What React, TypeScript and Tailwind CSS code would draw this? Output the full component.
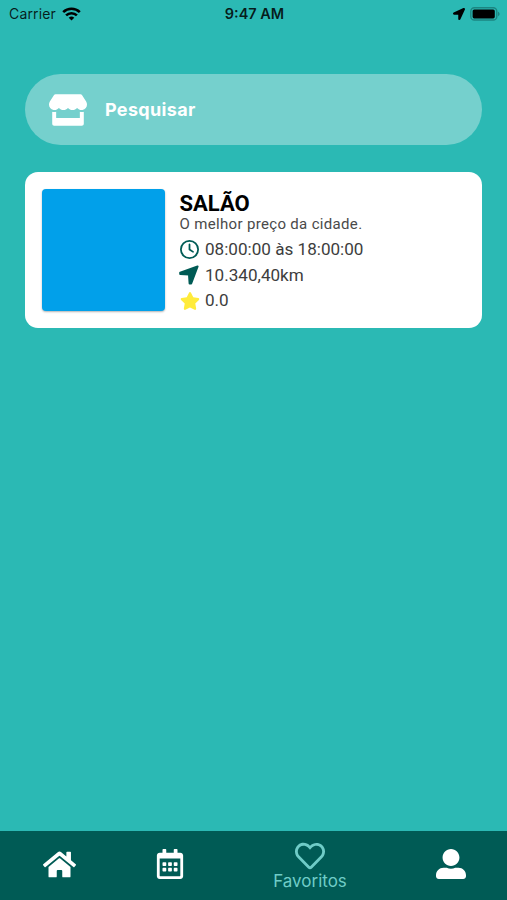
import type { ReactNode } from 'react';
import {
  FaHome,
  FaLocationArrow,
  FaRegCalendarAlt,
  FaRegHeart,
  FaStar,
  FaStore,
  FaUserAlt,
} from 'react-icons/fa';
import { FaRegClock } from 'react-icons/fa6';

interface Salon {
  id: string;
  name: string;
  description: string;
  hours: string;
  distance: string;
  rating: string;
}

const salons: Salon[] = [
  {
    id: '1',
    name: 'SALÃO',
    description: 'O melhor preço da cidade.',
    hours: '08:00:00 às 18:00:00',
    distance: '10.340,40km',
    rating: '0.0',
  },
];

function NavigateIcon({ className }: { className: string }) {
  return (
    <svg className={className} viewBox="0 0 20 20" fill="currentColor" stroke="currentColor" strokeWidth="2" strokeLinejoin="round">
      <path d="M18.6 1.4 1.2 7.6v1.5l8.8.5.6 8.9h1.6z" />
    </svg>
  );
}

function StatusBar() {
  return (
    <div className="flex h-[27px] items-center justify-between pl-[9px] pr-[7px] text-black/85">
      <div className="flex w-[120px] items-center gap-[6px]">
        <span className="text-[14px] tracking-[0.15px]">Carrier</span>
        <svg className="h-[14px] w-[19px]" viewBox="0 0 19 14" fill="none" stroke="black" strokeWidth="2.6">
          <path d="M1.2 5.1a11.9 11.9 0 0 1 16.6 0" />
          <path d="M4.1 8.4a7.7 7.7 0 0 1 10.8 0" />
          <path d="M9.5 13.5 6.7 10.8a4 4 0 0 1 5.6 0z" fill="black" stroke="none" />
        </svg>
      </div>
      <span className="text-[14.5px] font-semibold">9:47 AM</span>
      <div className="flex w-[120px] items-center justify-end gap-[5px]">
        <FaLocationArrow className="size-[12px] text-black" />
        <svg className="h-[14px] w-[30px]" viewBox="0 0 30 14">
          <rect x="0.8" y="0.8" width="26" height="12.2" rx="3.6" fill="none" stroke="#1c8581" strokeWidth="1.4" />
          <rect x="2.6" y="2.4" width="22.2" height="9" rx="1.6" fill="black" />
          <path d="M28 4.8v4.4c1-.4 1.6-1.2 1.6-2.2s-.6-1.8-1.6-2.2z" fill="#1c8581" />
        </svg>
      </div>
    </div>
  );
}

function InfoRow({ icon, children }: { icon: ReactNode; children: ReactNode }) {
  return (
    <div className="flex h-[25.6px] items-center gap-[6px] text-[17.1px] text-[#3d3d3d]">
      <span className="flex w-[20px] justify-center">{icon}</span>
      <span>{children}</span>
    </div>
  );
}

function SalonCard({ salon }: { salon: Salon }) {
  return (
    <div className="flex h-[156px] gap-[14px] rounded-[13px] bg-white p-[17px] font-[Roboto,sans-serif]">
      <div className="h-[122px] w-[123px] shrink-0 rounded-[4px] bg-[#01a0ea] shadow-[0_1px_2px_rgba(0,0,0,0.3)]" />
      <div className="pt-[3px]">
        <h2 className="pl-[0.5px] text-[22px] leading-[23px] font-bold text-black">{salon.name}</h2>
        <p className="mb-[4px] pl-[0.5px] text-[15px] leading-[18px] tracking-[0.33px] text-[#4a4a4a]">
          {salon.description}
        </p>
        <InfoRow icon={<FaRegClock className="size-[19px] text-[#005b55]" />}>{salon.hours}</InfoRow>
        <InfoRow icon={<NavigateIcon className="mb-[1px] size-[20px] text-[#005b55]" />}>{salon.distance}</InfoRow>
        <InfoRow icon={<FaStar className="ml-[2px] size-[20px] shrink-0 text-[#ffeb3b]" />}>{salon.rating}</InfoRow>
      </div>
    </div>
  );
}

function TabBar() {
  return (
    <nav className="flex h-[69px] items-center bg-[#005b55] text-white">
      <button className="flex w-[118px] justify-center pb-[3px]" aria-label="Início">
        <FaHome className="size-[33px]" />
      </button>
      <button className="flex w-[103px] justify-center pb-[3px]" aria-label="Agenda">
        <FaRegCalendarAlt className="size-[30px]" />
      </button>
      <button className="flex w-[178px] flex-col items-center text-[#6fccc7]">
        <FaRegHeart className="size-[30px]" />
        <span className="text-[17px] leading-[20px]">Favoritos</span>
      </button>
      <button className="flex w-[104px] justify-center pb-[3px]" aria-label="Perfil">
        <FaUserAlt className="size-[30px]" />
      </button>
    </nav>
  );
}

export default function App() {
  return (
    <div className="flex h-[900px] w-[507px] flex-col bg-[#2bb9b4] font-[Inter,sans-serif]">
      <StatusBar />
      <main className="flex flex-1 flex-col gap-[27px] px-[25px] pt-[47px]">
        <label className="flex h-[71px] items-center rounded-full bg-[#75d0cd] pl-[24px]">
          <FaStore className="size-[38px] shrink-0 text-white" />
          <span className="ml-[18px] text-[18px] font-bold tracking-[0.35px] text-white">Pesquisar</span>
        </label>
        {salons.map((salon) => (
          <SalonCard key={salon.id} salon={salon} />
        ))}
      </main>
      <TabBar />
    </div>
  );
}
